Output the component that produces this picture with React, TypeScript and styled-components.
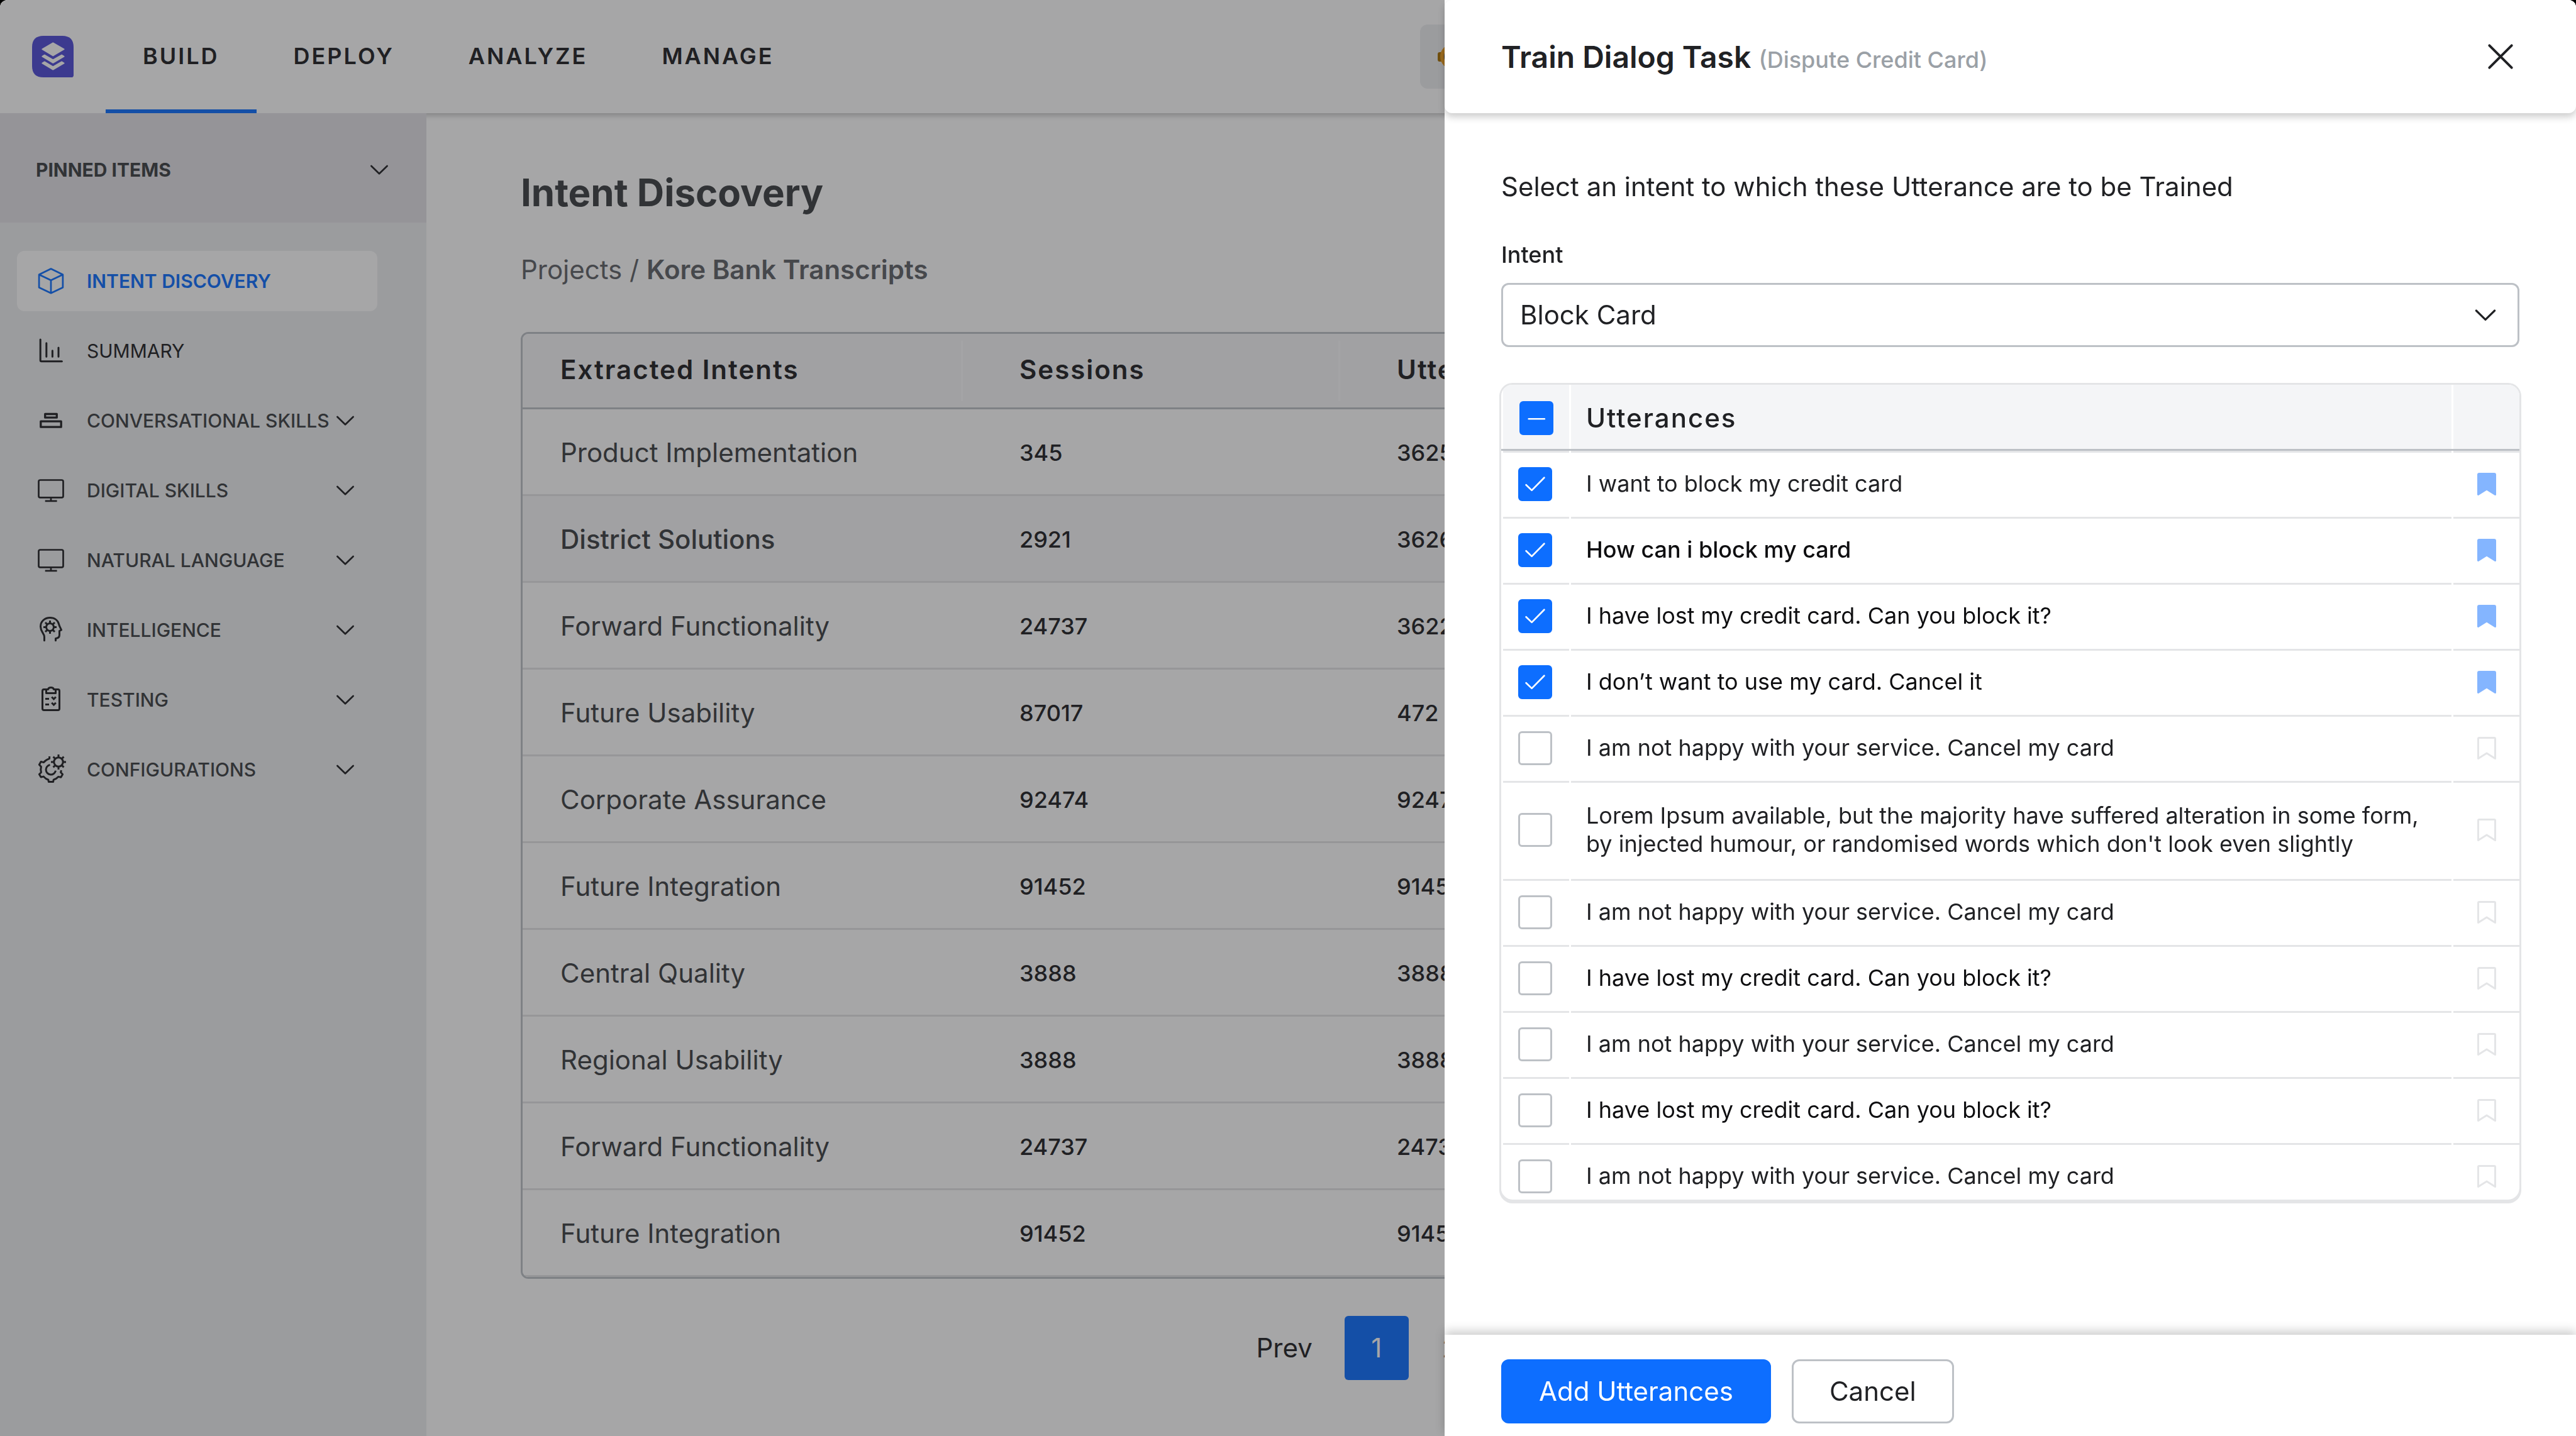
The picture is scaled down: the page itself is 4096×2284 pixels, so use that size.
import React, { useEffect, useRef, useState } from "react";
import styled, { createGlobalStyle, css } from "styled-components";

const color = {
  ink: "#202124",
  inkSoft: "#3c4043",
  inkMuted: "#5f6368",
  hint: "#9aa0a6",
  line: "#bdc1c6",
  lineSoft: "#e4e5e7",
  tint: "#f4f5f7",
  tintSoft: "#f7f7f9",
  blue: "#0d6eff",
  blueSoft: "#84b5ff",
};

const GlobalStyle = createGlobalStyle`
  *, *::before, *::after { box-sizing: border-box; }
  html { background: #000; }
  body {
    margin: 0;
    font-family: Inter, "Liberation Sans", sans-serif;
    font-size: 42px;
    line-height: 60px;
    color: ${color.ink};
    overflow: hidden;
  }
  button, input, select { font: inherit; color: inherit; margin: 0; }
  button { background: none; border: 0; padding: 0; cursor: pointer; }
  a { color: inherit; text-decoration: none; }
  svg { display: block; flex: none; }
`;

/* ---------- Icons ---------- */

const LineIcon = styled.svg.attrs({
  fill: "none",
  stroke: "currentColor",
  strokeLinejoin: "round",
  "aria-hidden": true,
})<{ $size?: number }>`
  width: ${(p) => p.$size ?? 48}px;
  height: ${(p) => p.$size ?? 48}px;
  color: ${color.ink};
`;

const Chevron = ({ size = 36 }: { size?: number }) => (
  <LineIcon viewBox="0 0 12 12" $size={size} strokeLinecap="round">
    <path d="M1.8 4 6 8.1 10.2 4" strokeWidth="0.9" />
  </LineIcon>
);

const CubeIcon = () => (
  <LineIcon viewBox="0 0 16 16" strokeWidth="0.9">
    <path d="M8 1.5 14.3 4.6V11.4L8 14.4 1.7 11.4V4.6ZM1.7 4.6 8 7.6 14.3 4.6M8 7.6V14.4" stroke={color.blue} />
  </LineIcon>
);

const ChartIcon = () => (
  <LineIcon viewBox="0 0 16 16" strokeLinecap="round">
    <path d="M2.4 2V13Q2.4 13.6 3 13.6H13.8M5.6 3.9V11.1M8.8 7.9V11.1M12 6.3V11.1" />
  </LineIcon>
);

const StackIcon = () => (
  <LineIcon viewBox="0 0 16 16" strokeWidth="1.1">
    <path d="M4.9 4.5H11.1V6.4H4.9ZM2.6 8.4H13.4V11.4H2.6Z" />
  </LineIcon>
);

const MonitorIcon = () => (
  <LineIcon viewBox="0 0 16 16" strokeWidth="0.9">
    <rect x="1.5" y="2.5" width="13" height="9.3" rx="0.8" />
    <path d="M8 11.8V13.5M4.9 13.6H11.2" />
  </LineIcon>
);

const HeadIcon = () => (
  <LineIcon viewBox="0 0 16 16" strokeLinecap="round">
    <path d="M4.5 13.6V11.7C4.5 9.6 2.5 9.1 2.5 6.2C2.5 3.5 4.6 1.5 7.5 1.5C10 1.5 11.7 2.9 12.2 4.9C12.5 6.2 13.1 6.9 13.5 8L12.5 8.5V10.7Q12.5 12.4 10.5 12.5V13.6" />
    <circle cx="7.5" cy="6.5" r="2" />
    <path
      strokeLinecap="butt"
      d="M7.5 4.6V3M7.5 8.4V10M5.6 6.5H4M9.4 6.5H11M6.2 5.2 5 4M8.8 7.8 10 9M8.8 5.2 10 4M6.2 7.8 5 9"
    />
  </LineIcon>
);

const ClipboardIcon = () => (
  <LineIcon viewBox="0 0 16 16">
    <path d="M6.2 2.5H4.3Q3.5 2.5 3.5 3.3V12.7Q3.5 13.5 4.3 13.5H11.7Q12.5 13.5 12.5 12.7V3.3Q12.5 2.5 11.7 2.5H9.8" />
    <path d="M5.5 2.5V4.5H10.5V2.5H9.5Q9.3 1.5 8 1.5T6.5 2.5Z" />
    <path d="M5 7.5H7M5 10.5H7M8.4 6.5 9.5 7.6 10.6 6.5M8.4 9.6 9.5 10.7 10.6 9.6" strokeLinejoin="miter" />
  </LineIcon>
);

const GearsIcon = () => (
  <LineIcon viewBox="0 0 16 16" strokeLinejoin="miter">
    <path d="M7.2 1V2.2Q5.6 2.6 4.1 4.2L2.7 3.8 1.8 5.4 2.8 6.5Q2.4 8 2.8 9.5L1.8 10.5 2.7 12 4.1 11.7Q5.2 13 6.6 13.4L6.8 14.5H9.2L9.4 13.4Q10.9 12.9 11.9 11.8L13.3 12.1 14.2 10.5 13.2 9.5 13.5 8.4" />
    <path d="M7.5 5.5A2.6 2.6 0 1 0 10.5 8.6" />
    <circle cx="12" cy="4" r="2.4" />
    <path d="M12 1.6V0M12 6.4V8M9.6 4H8M14.4 4H16M10.3 2.3 9.2 1.2M13.7 5.7 14.8 6.8M13.7 2.3 14.8 1.2M10.3 5.7 9.2 6.8" />
  </LineIcon>
);

const CloseIcon = () => (
  <LineIcon viewBox="0 0 16 16" strokeLinecap="round">
    <path d="M2.1 2.1 13.9 13.9M13.9 2.1 2.1 13.9" strokeWidth="1.3" />
  </LineIcon>
);

const BookmarkIcon = ({ filled }: { filled: boolean }) => (
  <LineIcon viewBox="0 0 16 16">
    <path
      d="M3.5 3Q3.5 2.5 4 2.5H12Q12.5 2.5 12.5 3V13.5L8 10.7 3.5 13.5Z"
      fill={filled ? color.blueSoft : "none"}
      stroke={filled ? color.blueSoft : color.lineSoft}
    />
  </LineIcon>
);

const Logo = () => (
  <svg width="66" height="66" viewBox="0 0 22 22" role="img" aria-label="Home">
    <path d="M6 0H16Q22 0 22 6V20.8Q22 22 20.8 22H6Q0 22 0 16V6Q0 0 6 0Z" fill="#4f4cd8" />
    <g fill="#fff" stroke="#fff" strokeWidth="0.6" strokeLinejoin="round">
      <path d="M11.1 3.8 16.9 7.1 11.1 10.5 5.4 7.1Z" />
      <path d="M6.6 10.2 11.1 12.8 15.7 10.2 16.9 10.9 11.1 14.3 5.4 10.9Z" />
      <path d="M6.6 13.8 11.1 16.4 15.7 13.8 16.9 14.5 11.1 17.9 5.4 14.5Z" />
    </g>
  </svg>
);

const BotAvatar = () => (
  <svg width="48" height="48" viewBox="0 0 48 48" aria-hidden="true">
    <rect x="0" y="17" width="10" height="15" rx="3" fill="#a86f00" />
    <rect x="38" y="17" width="10" height="15" rx="3" fill="#a86f00" />
    <circle cx="24" cy="24" r="20" fill="#ec9c1c" />
    <circle cx="24" cy="24" r="14" fill="#3a3a44" />
  </svg>
);

/* ---------- Application shell ---------- */

const Shell = styled.div`
  display: grid;
  grid-template-rows: auto 1fr;
  min-height: 100vh;
  background: #fff;
  border-radius: 12px 12px 0 0;
  overflow: hidden;
`;

const Header = styled.header`
  display: grid;
  grid-template-columns: auto 1fr 1838px;
  align-items: center;
  height: 180px;
  padding-left: 51px;
  background: #fff;
  box-shadow: 0 3px 9px rgba(0, 0, 0, 0.25);
  z-index: 1;
`;

const MainNav = styled.nav`
  display: flex;
  height: 100%;
  padding-left: 51px;
`;

const NavTab = styled.a<{ $active?: boolean }>`
  display: flex;
  align-items: center;
  padding: 3px 59px 0;
  border-bottom: 6px solid ${(p) => (p.$active ? color.blue : "transparent")};
  font-size: 36px;
  font-weight: 600;
  letter-spacing: 3px;
`;

const BotPicker = styled.button`
  display: flex;
  align-items: center;
  width: 600px;
  height: 102px;
  padding: 0 28px;
  border-radius: 12px;
  background: #edeef0;
`;

const Columns = styled.div`
  display: grid;
  grid-template-columns: 678px minmax(0, 1fr);
`;

const Sidebar = styled.aside`
  background: #edeff0;
  z-index: 2;
`;

const PinnedToggle = styled.button`
  display: flex;
  align-items: center;
  justify-content: space-between;
  width: 100%;
  height: 174px;
  padding: 6px 57px 0;
  background: #e3e2e7;
  color: ${color.inkSoft};
  font-size: 30px;
  font-weight: 700;
`;

const SideNav = styled.nav`
  display: flex;
  flex-direction: column;
  gap: 15px;
  padding: 45px 78px 45px 27px;
`;

const SideLink = styled.a<{ $tone: "active" | "plain" | "group" }>`
  display: grid;
  grid-template-columns: 48px 1fr auto;
  column-gap: 33px;
  align-items: center;
  height: 96px;
  padding: 0 33px 0 30px;
  border-radius: 12px;
  font-size: 30px;
  white-space: nowrap;
  ${(p) => p.$tone === "active" && css`background: #fff; color: ${color.blue}; font-weight: 600;`}
  ${(p) => p.$tone === "group" && css`color: ${color.inkSoft}; font-weight: 500;`}
`;

const SideLabel = styled.span`
  display: flex;
  align-items: center;
  justify-content: space-between;
  grid-column: 2 / -1;
`;

const Main = styled.main`
  padding: 90px 192px 0 150px;
`;

const PageTitle = styled.h1`
  margin: 0 0 57px;
  color: ${color.inkSoft};
  font-size: 60px;
  line-height: 72px;
  font-weight: 700;
`;

const Breadcrumb = styled.nav`
  margin-bottom: 69px;
  color: ${color.inkMuted};

  strong { font-weight: 600; }
`;

const IntentFrame = styled.div`
  border: 3px solid ${color.line};
  border-radius: 12px;
  overflow: hidden;
`;

const IntentTable = styled.table`
  width: 100%;
  table-layout: fixed;
  border-collapse: separate;
  border-spacing: 0;
  text-align: left;
`;

const IntentCol = styled.col<{ $width?: number }>`
  width: ${(p) => (p.$width ? `${p.$width}px` : "auto")};
`;

const IntentHead = styled.th`
  height: 120px;
  padding: 0 0 3px 93px;
  border-bottom: 3px solid ${color.line};
  background: linear-gradient(#fcfcfd, #fcfcfd) left center / 3px 96px no-repeat ${color.tintSoft};
  font-weight: 600;
  letter-spacing: 2px;

  &:first-child {
    padding-left: 60px;
    background: ${color.tintSoft};
  }
`;

const IntentRow = styled.tr<{ $hovered?: boolean }>`
  background: ${(p) => (p.$hovered ? color.tintSoft : "#fff")};
  font-weight: ${(p) => (p.$hovered ? 500 : 400)};
`;

const IntentName = styled.td`
  height: 138px;
  padding: 3px 0 0 60px;
  border-bottom: 3px solid ${color.lineSoft};
  color: ${color.inkSoft};
`;

const IntentCount = styled.td`
  padding: 3px 0 0 93px;
  border-bottom: 3px solid ${color.lineSoft};
  font-size: 36px;
  font-weight: 500;
`;

const Pager = styled.nav`
  display: flex;
  justify-content: center;
  gap: 15px;
  margin-top: 59px;
`;

const PageButton = styled.button<{ $current?: boolean }>`
  min-width: 102px;
  height: 102px;
  padding: 0 36px;
  border-radius: 6px;
  background: ${(p) => (p.$current ? color.blue : "transparent")};
  color: ${(p) => (p.$current ? "#fff" : color.ink)};
`;

/* ---------- Drawer ---------- */

const Scrim = styled.div`
  position: fixed;
  inset: 0;
  background: rgba(32, 33, 36, 0.4);
  border-radius: 12px 12px 0 0;
  z-index: 3;
`;

const Drawer = styled.section`
  position: fixed;
  top: 0;
  right: 0;
  bottom: 0;
  z-index: 4;
  display: flex;
  flex-direction: column;
  width: 1799px;
  background: #fff;
  border-radius: 0 12px 0 0;
`;

const DrawerHeader = styled.header`
  display: flex;
  align-items: center;
  justify-content: space-between;
  height: 180px;
  padding: 0 96px 0 90px;
  background: #fff;
  border-radius: 12px;
  box-shadow: 0 6px 12px rgba(0, 0, 0, 0.2);
`;

const DrawerTitle = styled.h2`
  margin: 0;
  padding-top: 6px;
  font-size: 48px;
  font-weight: 600;

  small {
    color: ${color.hint};
    font-size: 36px;
    font-weight: 500;
  }
`;

const DrawerBody = styled.div`
  display: flex;
  flex-direction: column;
  flex: 1;
  min-height: 0;
  padding: 87px 90px 0;
`;

const Prompt = styled.p`
  margin: 0 0 57px;
`;

const FieldLabel = styled.label`
  margin-bottom: 24px;
  font-size: 36px;
  line-height: 42px;
  font-weight: 500;
`;

const SelectBox = styled.div`
  display: grid;
  align-items: center;
  margin-bottom: 60px;

  select, svg { grid-area: 1 / 1; }
  svg { justify-self: end; margin-right: 33px; pointer-events: none; }
`;

const Select = styled.select`
  appearance: none;
  width: 100%;
  height: 102px;
  padding: 0 27px;
  border: 3px solid ${color.line};
  border-radius: 12px;
  background: #fff;
`;

const UtteranceFrame = styled.div`
  max-height: 1296px;
  overflow: hidden;
  border-radius: 18px;
  box-shadow: 0 0 0 3px ${color.lineSoft}, 0 3px 0 3px ${color.lineSoft};
`;

const UtteranceTable = styled.table`
  width: 100%;
  table-layout: fixed;
  border-collapse: separate;
  border-spacing: 0;
  text-align: left;
`;

const EdgeCol = styled.col`
  width: 108px;
`;

const UtteranceHeadRow = styled.tr`
  background: linear-gradient(${color.line}, ${color.line}) 0 102px / 100% 3px no-repeat #fff;
`;

const UtteranceHead = styled.th<{ $center?: boolean }>`
  height: 108px;
  padding: 0 ${(p) => (p.$center ? 0 : 24)}px 3px;
  border-left: 3px solid transparent;
  background: ${color.tint};
  background-clip: padding-box;
  box-shadow: inset 0 -3px 0 ${color.lineSoft}, inset 0 -6px 0 ${color.line};
  font-weight: 500;
  letter-spacing: 2px;
`;

const UtteranceRow = styled.tr<{ $tall: boolean }>`
  height: ${(p) => (p.$tall ? 156 : 105)}px;
`;

const UtteranceCell = styled.td<{ $center?: boolean }>`
  padding: 0 ${(p) => (p.$center ? 0 : 24)}px 6px;
  border-left: 3px solid #fff;
  box-shadow: inset 0 -3px 0 ${color.lineSoft};

  &:first-child { padding-right: 3px; }
`;

const Utterance = styled.label<{ $tone: "plain" | "dark" | "strong" }>`
  display: block;
  font-size: 36px;
  line-height: 45px;
  color: ${(p) => (p.$tone === "plain" ? color.ink : "#0e0e10")};
  font-weight: ${(p) => (p.$tone === "strong" ? 500 : 400)};
`;

const TickBox = styled.span`
  display: grid;
  width: 54px;
  height: 54px;
  margin: 0 auto;

  input, svg { grid-area: 1 / 1; }
  svg { pointer-events: none; }
`;

const TickInput = styled.input`
  appearance: none;
  width: 54px;
  height: 54px;
  border: 3px solid ${color.line};
  border-radius: 6px;
  background: #fff;

  &:checked, &:indeterminate {
    border-color: ${color.blue};
    background: ${color.blue};
  }
`;

const TickMark = styled.svg.attrs({
  viewBox: "0 0 18 18",
  fill: "none",
  stroke: "#fff",
  strokeLinecap: "round",
  strokeLinejoin: "round",
  "aria-hidden": true,
})`
  width: 54px;
  height: 54px;
`;

const BookmarkButton = styled.button`
  display: block;
  margin: 0 auto;
`;

const DrawerFooter = styled.footer`
  display: flex;
  gap: 33px;
  padding: 39px 90px 20px;
  background: #fff;
  box-shadow: 0 -6px 15px rgba(0, 0, 0, 0.2);
`;

const ActionButton = styled.button<{ $primary?: boolean }>`
  height: 102px;
  padding: 0 57px;
  border: 3px solid ${(p) => (p.$primary ? color.blue : color.line)};
  border-radius: 12px;
  background: ${(p) => (p.$primary ? color.blue : "#fff")};
  color: ${(p) => (p.$primary ? "#fff" : color.ink)};
`;

/* ---------- Data ---------- */

const tabs = ["BUILD", "DEPLOY", "ANALYZE", "MANAGE"];

const sideItems: { label: string; icon: React.ReactNode; tone: "active" | "plain" | "group" }[] = [
  { label: "INTENT DISCOVERY", icon: <CubeIcon />, tone: "active" },
  { label: "SUMMARY", icon: <ChartIcon />, tone: "plain" },
  { label: "CONVERSATIONAL SKILLS", icon: <StackIcon />, tone: "group" },
  { label: "DIGITAL SKILLS", icon: <MonitorIcon />, tone: "group" },
  { label: "NATURAL LANGUAGE", icon: <MonitorIcon />, tone: "group" },
  { label: "INTELLIGENCE", icon: <HeadIcon />, tone: "group" },
  { label: "TESTING", icon: <ClipboardIcon />, tone: "group" },
  { label: "CONFIGURATIONS", icon: <GearsIcon />, tone: "group" },
];

const intents = [
  ["Product Implementation", "345", "3625"],
  ["District Solutions", "2921", "3626"],
  ["Forward Functionality", "24737", "3622"],
  ["Future Usability", "87017", "472"],
  ["Corporate Assurance", "92474", "92474"],
  ["Future Integration", "91452", "91452"],
  ["Central Quality", "3888", "3888"],
  ["Regional Usability", "3888", "3888"],
  ["Forward Functionality", "24737", "24737"],
  ["Future Integration", "91452", "91452"],
];

const pages = ["Prev", "1", "2", "3", "4", "Next"];

type Tone = "plain" | "dark" | "strong";

const utterances: { text: string; on: boolean; tone: Tone; tall?: boolean }[] = [
  { text: "I want to block my credit card", on: true, tone: "plain" },
  { text: "How can i block my card", on: true, tone: "strong" },
  { text: "I have lost my credit card. Can you block it?", on: true, tone: "dark" },
  { text: "I don’t want to use my card. Cancel it", on: true, tone: "dark" },
  { text: "I am not happy with your service. Cancel my card", on: false, tone: "plain" },
  {
    text: "Lorem Ipsum available, but the majority have suffered alteration in some form, by injected humour, or randomised words which don't look even slightly",
    on: false,
    tone: "plain",
    tall: true,
  },
  { text: "I am not happy with your service. Cancel my card", on: false, tone: "plain" },
  { text: "I have lost my credit card. Can you block it?", on: false, tone: "dark" },
  { text: "I am not happy with your service. Cancel my card", on: false, tone: "plain" },
  { text: "I have lost my credit card. Can you block it?", on: false, tone: "dark" },
  { text: "I am not happy with your service. Cancel my card", on: false, tone: "plain" },
];

/* ---------- Parts ---------- */

type TickProps = {
  id: string;
  checked: boolean;
  partial?: boolean;
  label?: string;
  onToggle: () => void;
};

const Tick = ({ id, checked, partial = false, label, onToggle }: TickProps) => {
  const ref = useRef<HTMLInputElement>(null);
  useEffect(() => {
    if (ref.current) ref.current.indeterminate = partial;
  }, [partial]);
  return (
    <TickBox>
      <TickInput ref={ref} id={id} type="checkbox" checked={checked} aria-label={label} onChange={onToggle} />
      {(checked || partial) && (
        <TickMark>
          {partial ? (
            <path d="M4.9 9.4H13.3" strokeWidth="0.8" />
          ) : (
            <path d="M4.2 9.4 7.2 12.3 13.8 5.6" strokeWidth="0.9" />
          )}
        </TickMark>
      )}
    </TickBox>
  );
};

const TrainDrawer = () => {
  const [ticked, setTicked] = useState(utterances.map((u) => u.on));
  const all = ticked.every(Boolean);
  const some = ticked.some(Boolean);

  return (
    <Drawer role="dialog" aria-labelledby="drawer-title">
      <DrawerHeader>
        <DrawerTitle id="drawer-title">
          Train Dialog Task <small>(Dispute Credit Card)</small>
        </DrawerTitle>
        <button type="button" aria-label="Close">
          <CloseIcon />
        </button>
      </DrawerHeader>
      <DrawerBody>
        <Prompt>Select an intent to which these Utterance are to be Trained</Prompt>
        <FieldLabel htmlFor="intent">Intent</FieldLabel>
        <SelectBox>
          <Select id="intent" defaultValue="block">
            <option value="block">Block Card</option>
          </Select>
          <Chevron size={42} />
        </SelectBox>
        <UtteranceFrame>
          <UtteranceTable>
            <colgroup>
              <EdgeCol />
              <col />
              <EdgeCol />
            </colgroup>
            <thead>
              <UtteranceHeadRow>
                <UtteranceHead $center>
                  <Tick
                    id="all"
                    label="Select all utterances"
                    checked={all}
                    partial={some && !all}
                    onToggle={() => setTicked(ticked.map(() => !all))}
                  />
                </UtteranceHead>
                <UtteranceHead>Utterances</UtteranceHead>
                <UtteranceHead $center />
              </UtteranceHeadRow>
            </thead>
            <tbody>
              {utterances.map((u, i) => (
                <UtteranceRow key={i} $tall={Boolean(u.tall)}>
                  <UtteranceCell $center>
                    <Tick
                      id={`utterance-${i}`}
                      checked={ticked[i]}
                      onToggle={() => setTicked(ticked.map((t, j) => (j === i ? !t : t)))}
                    />
                  </UtteranceCell>
                  <UtteranceCell>
                    <Utterance htmlFor={`utterance-${i}`} $tone={u.tone}>
                      {u.text}
                    </Utterance>
                  </UtteranceCell>
                  <UtteranceCell $center>
                    <BookmarkButton type="button" aria-label="Bookmark" aria-pressed={u.on}>
                      <BookmarkIcon filled={u.on} />
                    </BookmarkButton>
                  </UtteranceCell>
                </UtteranceRow>
              ))}
            </tbody>
          </UtteranceTable>
        </UtteranceFrame>
      </DrawerBody>
      <DrawerFooter>
        <ActionButton type="button" $primary>
          Add Utterances
        </ActionButton>
        <ActionButton type="button">Cancel</ActionButton>
      </DrawerFooter>
    </Drawer>
  );
};

export default function App() {
  return (
    <>
      <GlobalStyle />
      <Shell>
        <Header>
          <Logo />
          <MainNav>
            {tabs.map((t, i) => (
              <NavTab key={t} href="#" $active={i === 0}>
                {t}
              </NavTab>
            ))}
          </MainNav>
          <BotPicker type="button" aria-label="Choose bot">
            <BotAvatar />
          </BotPicker>
        </Header>
        <Columns>
          <Sidebar>
            <PinnedToggle type="button">
              PINNED ITEMS
              <Chevron />
            </PinnedToggle>
            <SideNav>
              {sideItems.map((s) => (
                <SideLink key={s.label} href="#" $tone={s.tone}>
                  {s.icon}
                  <SideLabel>
                    {s.label}
                    {s.tone === "group" && <Chevron />}
                  </SideLabel>
                </SideLink>
              ))}
            </SideNav>
          </Sidebar>
          <Main>
            <PageTitle>Intent Discovery</PageTitle>
            <Breadcrumb>
              <a href="#">Projects</a> / <strong>Kore Bank Transcripts</strong>
            </Breadcrumb>
            <IntentFrame>
              <IntentTable>
                <colgroup>
                  <IntentCol $width={697} />
                  <IntentCol $width={600} />
                  <IntentCol />
                </colgroup>
                <thead>
                  <tr>
                    <IntentHead>Extracted Intents</IntentHead>
                    <IntentHead>Sessions</IntentHead>
                    <IntentHead>Utterances</IntentHead>
                  </tr>
                </thead>
                <tbody>
                  {intents.map(([name, sessions, count], i) => (
                    <IntentRow key={i} $hovered={i === 1}>
                      <IntentName>{name}</IntentName>
                      <IntentCount>{sessions}</IntentCount>
                      <IntentCount>{count}</IntentCount>
                    </IntentRow>
                  ))}
                </tbody>
              </IntentTable>
            </IntentFrame>
            <Pager>
              {pages.map((p) => (
                <PageButton key={p} type="button" $current={p === "1"}>
                  {p}
                </PageButton>
              ))}
            </Pager>
          </Main>
        </Columns>
      </Shell>
      <Scrim />
      <TrainDrawer />
    </>
  );
}
